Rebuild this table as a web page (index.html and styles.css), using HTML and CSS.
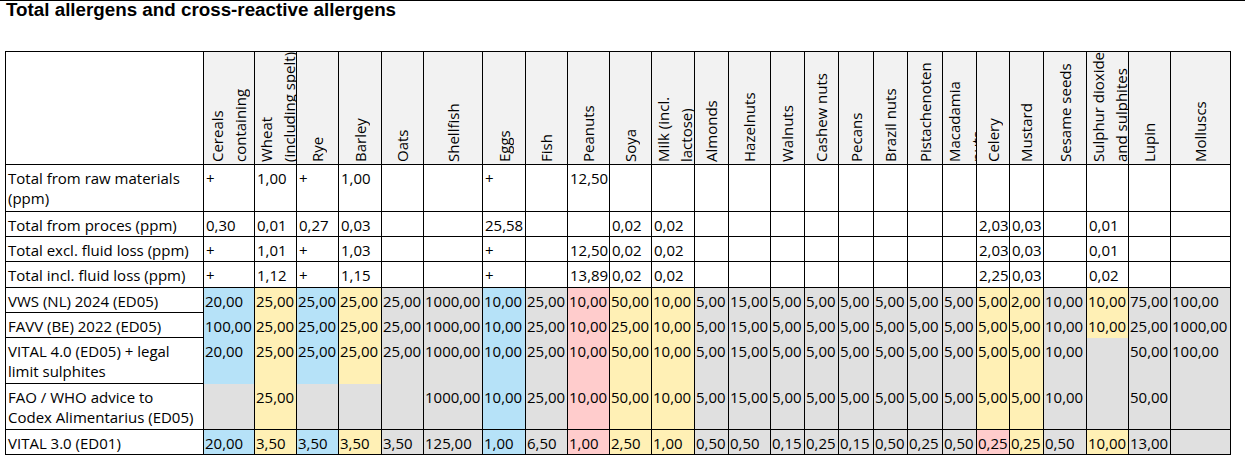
FILE: index.html
```html
<!DOCTYPE html>
<html lang="en">
<head>
<meta charset="utf-8">
<title>Total allergens and cross-reactive allergens</title>
<link rel="stylesheet" href="styles.css">
</head>
<body>
<div class="topline"></div>
<h1 class="title">Total allergens and cross-reactive allergens</h1>
<table class="grid">
<colgroup>
<col class="w198"><col class="w51"><col class="w42"><col class="w42"><col class="w43"><col class="w42"><col class="w59"><col class="w43"><col class="w42"><col class="w42"><col class="w42"><col class="w43"><col class="w34"><col class="w42"><col class="w34"><col class="w34"><col class="w35"><col class="w34"><col class="w35"><col class="w34"><col class="w33"><col class="w34"><col class="w43"><col class="w42"><col class="w42"><col class="w60">
</colgroup>
<thead>
<tr class="hrow">
<th class="corner"></th>
<th class="hd"><div class="rt">Cereals<br>containing</div></th>
<th class="hd"><div class="rt">Wheat<br>(including spelt)</div></th>
<th class="hd"><div class="rt">Rye</div></th>
<th class="hd"><div class="rt">Barley</div></th>
<th class="hd"><div class="rt">Oats</div></th>
<th class="hd"><div class="rt">Shellfish</div></th>
<th class="hd"><div class="rt">Eggs</div></th>
<th class="hd"><div class="rt">Fish</div></th>
<th class="hd"><div class="rt">Peanuts</div></th>
<th class="hd"><div class="rt">Soya</div></th>
<th class="hd"><div class="rt">Milk (incl.<br>lactose)</div></th>
<th class="hd"><div class="rt">Almonds</div></th>
<th class="hd"><div class="rt">Hazelnuts</div></th>
<th class="hd"><div class="rt">Walnuts</div></th>
<th class="hd"><div class="rt">Cashew nuts</div></th>
<th class="hd"><div class="rt">Pecans</div></th>
<th class="hd"><div class="rt">Brazil nuts</div></th>
<th class="hd"><div class="rt">Pistachenoten</div></th>
<th class="hd"><div class="rt">Macadamia<br>nuts</div></th>
<th class="hd"><div class="rt">Celery</div></th>
<th class="hd"><div class="rt">Mustard</div></th>
<th class="hd"><div class="rt">Sesame seeds</div></th>
<th class="hd"><div class="rt">Sulphur dioxide<br>and sulphites</div></th>
<th class="hd"><div class="rt">Lupin</div></th>
<th class="hd"><div class="rt">Molluscs</div></th>
</tr>
</thead>
<tbody>
<tr class="h47">
<td class="lbl">Total from raw materials<br>(ppm)</td>
<td>+</td><td>1,00</td><td>+</td><td>1,00</td><td></td><td></td><td>+</td><td></td><td>12,50</td><td></td><td></td><td></td><td></td><td></td><td></td><td></td><td></td><td></td><td></td><td></td><td></td><td></td><td></td><td></td><td></td>
</tr>
<tr class="h25">
<td class="lbl">Total from proces (ppm)</td>
<td>0,30</td><td>0,01</td><td>0,27</td><td>0,03</td><td></td><td></td><td>25,58</td><td></td><td></td><td>0,02</td><td>0,02</td><td></td><td></td><td></td><td></td><td></td><td></td><td></td><td></td><td>2,03</td><td>0,03</td><td></td><td>0,01</td><td></td><td></td>
</tr>
<tr class="h25">
<td class="lbl">Total excl. fluid loss (ppm)</td>
<td>+</td><td>1,01</td><td>+</td><td>1,03</td><td></td><td></td><td>+</td><td></td><td>12,50</td><td>0,02</td><td>0,02</td><td></td><td></td><td></td><td></td><td></td><td></td><td></td><td></td><td>2,03</td><td>0,03</td><td></td><td>0,01</td><td></td><td></td>
</tr>
<tr class="h26">
<td class="lbl">Total incl. fluid loss (ppm)</td>
<td>+</td><td>1,12</td><td>+</td><td>1,15</td><td></td><td></td><td>+</td><td></td><td>13,89</td><td>0,02</td><td>0,02</td><td></td><td></td><td></td><td></td><td></td><td></td><td></td><td></td><td>2,25</td><td>0,03</td><td></td><td>0,02</td><td></td><td></td>
</tr>
<tr class="h25 reg">
<td class="lbl">VWS (NL) 2024 (ED05)</td>
<td class="b">20,00</td><td class="y">25,00</td><td class="b">25,00</td><td class="y">25,00</td><td>25,00</td><td>1000,00</td><td class="b">10,00</td><td>25,00</td><td class="p">10,00</td><td class="y">50,00</td><td class="y">10,00</td><td>5,00</td><td>15,00</td><td>5,00</td><td>5,00</td><td>5,00</td><td>5,00</td><td>5,00</td><td>5,00</td><td class="y">5,00</td><td class="y">2,00</td><td>10,00</td><td class="y">10,00</td><td>75,00</td><td>100,00</td>
</tr>
<tr class="h25 reg">
<td class="lbl">FAVV (BE) 2022 (ED05)</td>
<td class="b">100,00</td><td class="y">25,00</td><td class="b">25,00</td><td class="y">25,00</td><td>25,00</td><td>1000,00</td><td class="b">10,00</td><td>25,00</td><td class="p">10,00</td><td class="y">25,00</td><td class="y">10,00</td><td>5,00</td><td>15,00</td><td>5,00</td><td>5,00</td><td>5,00</td><td>5,00</td><td>5,00</td><td>5,00</td><td class="y">5,00</td><td class="y">5,00</td><td>10,00</td><td class="y">10,00</td><td>25,00</td><td>1000,00</td>
</tr>
<tr class="h46 reg">
<td class="lbl">VITAL 4.0 (ED05) + legal<br>limit sulphites</td>
<td class="b">20,00</td><td class="y">25,00</td><td class="b">25,00</td><td class="y">25,00</td><td>25,00</td><td>1000,00</td><td class="b">10,00</td><td>25,00</td><td class="p">10,00</td><td class="y">50,00</td><td class="y">10,00</td><td>5,00</td><td>15,00</td><td>5,00</td><td>5,00</td><td>5,00</td><td>5,00</td><td>5,00</td><td>5,00</td><td class="y">5,00</td><td class="y">5,00</td><td>10,00</td><td></td><td>50,00</td><td>100,00</td>
</tr>
<tr class="h46 reg">
<td class="lbl">FAO / WHO advice to<br>Codex Alimentarius (ED05)</td>
<td></td><td class="y">25,00</td><td></td><td></td><td></td><td>1000,00</td><td class="b">10,00</td><td>25,00</td><td class="p">10,00</td><td class="y">50,00</td><td class="y">10,00</td><td>5,00</td><td>15,00</td><td>5,00</td><td>5,00</td><td>5,00</td><td>5,00</td><td>5,00</td><td>5,00</td><td class="y">5,00</td><td class="y">5,00</td><td>10,00</td><td></td><td>50,00</td><td></td>
</tr>
<tr class="h25 reg last">
<td class="lbl">VITAL 3.0 (ED01)</td>
<td class="b">20,00</td><td class="y">3,50</td><td class="b">3,50</td><td class="y">3,50</td><td>3,50</td><td>125,00</td><td class="b">1,00</td><td>6,50</td><td class="p">1,00</td><td class="y">2,50</td><td class="y">1,00</td><td>0,50</td><td>0,50</td><td>0,15</td><td>0,25</td><td>0,15</td><td>0,50</td><td>0,25</td><td>0,50</td><td class="p">0,25</td><td class="y">0,25</td><td>0,50</td><td class="y">10,00</td><td>13,00</td><td></td>
</tr>
</tbody>
</table>
</body>
</html>
```

FILE: styles.css
```css
html, body {
  margin: 0;
  padding: 0;
  background: #ffffff;
}

body {
  font-family: "Open Sans", "Noto Sans", sans-serif;
  color: #000000;
}

.topline {
  width: 1245px;
  height: 1px;
  background: #000000;
}

.title {
  margin: 0;
  padding-left: 6px;
  font-family: "Liberation Sans", Arial, sans-serif;
  font-weight: bold;
  font-size: 18.8px;
  line-height: 18px;
  height: 18px;
}

.grid {
  margin-top: 32px;
  margin-left: 5px;
  border-collapse: collapse;
  table-layout: fixed;
  width: 1226px;
  font-size: 15px;
}

.w198 { width: 198px; }
.w60 { width: 60px; }
.w59 { width: 59px; }
.w51 { width: 51px; }
.w43 { width: 43px; }
.w42 { width: 42px; }
.w35 { width: 35px; }
.w34 { width: 34px; }
.w33 { width: 33px; }

.grid th,
.grid td {
  border: 1px solid #000000;
  padding: 0;
  overflow: hidden;
  white-space: nowrap;
}

.hrow { height: 113px; }

.corner {
  background: #ffffff;
}

.hd {
  background: #f2f2f2;
  border-top: none;
  vertical-align: bottom;
  font-weight: normal;
}

.rt {
  writing-mode: vertical-rl;
  transform: rotate(180deg);
  height: 109px;
  margin: 0 auto 2px;
  line-height: 23px;
  text-align: start;
  white-space: nowrap;
}

.grid td {
  vertical-align: top;
  line-height: 20px;
  padding: 3px 0 0 2px;
  text-align: left;
}

.grid td.lbl {
  padding-left: 2px;
  background: #ffffff;
}

.h47 { height: 47px; }
.h46 { height: 46px; }
.h26 { height: 26px; }
.h25 { height: 25px; }

.reg td {
  background: #e0e0e0;
  border-top: none;
  border-bottom: none;
  padding-left: 1px;
}

.reg td.lbl {
  border-top: 1px solid #000000;
  border-bottom: 1px solid #000000;
}

.reg.last td {
  border-top: 1px solid #000000;
  border-bottom: 1px solid #000000;
}

.reg td.b { background: #b6e2f8; }
.reg td.y { background: #fff0b5; }
.reg td.p { background: #ffcccc; }
```
